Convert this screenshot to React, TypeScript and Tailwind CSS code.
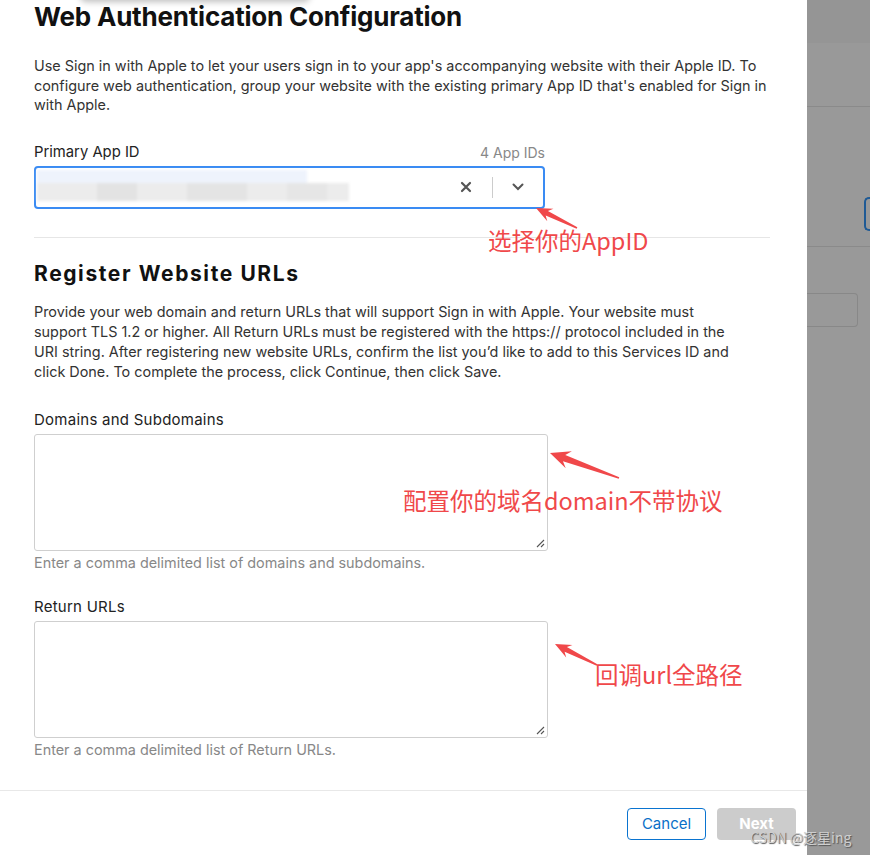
import React from "react";

type Pt = [number, number];

// red annotation arrow: tip at `tip`, tail at `tail`
function arrowPoints(tip: Pt, tail: Pt, head = 18, barb = 8, shaft = 3.2) {
  const dx = tail[0] - tip[0];
  const dy = tail[1] - tip[1];
  const len = Math.hypot(dx, dy);
  const ux = dx / len;
  const uy = dy / len;
  const nx = -uy;
  const ny = ux;
  const at = (d: number, o: number): Pt => [tip[0] + ux * d + nx * o, tip[1] + uy * d + ny * o];
  const pts: Pt[] = [
    tip,
    at(head, barb),
    at(head * 0.75, shaft),
    at(len, 0.8),
    at(len, -0.8),
    at(head * 0.75, -shaft),
    at(head, -barb),
  ];
  return pts.map((p) => p.join(",")).join(" ");
}

function Annotations() {
  return (
    <svg className="pointer-events-none absolute left-0 top-0" width={870} height={855}>
      <polygon points={arrowPoints([536, 208], [577, 228], 16, 7, 2.6)} fill="#f0484a" />
      <polygon points={arrowPoints([550, 453], [619, 478], 20, 9, 3.4)} fill="#f0484a" />
      <polygon points={arrowPoints([555, 644], [597, 665], 16, 7, 2.6)} fill="#f0484a" />
    </svg>
  );
}

function Note({ text, className }: { text: string; className: string }) {
  return (
    <div
      className={`absolute whitespace-nowrap text-[23.5px] leading-[28px] text-[#f0484a] ${className}`}
      style={{ fontFamily: '"Noto Sans CJK SC", "Noto Sans", sans-serif' }}
    >
      {text}
    </div>
  );
}

function ResizeHandle() {
  return (
    <svg className="absolute bottom-[2px] right-[2px]" width={10} height={10} viewBox="0 0 10 10">
      <line x1="9" y1="2" x2="2" y2="9" stroke="#555" strokeWidth="1.1" />
      <line x1="9" y1="6" x2="6" y2="9" stroke="#555" strokeWidth="1.1" />
    </svg>
  );
}

function TextField({ label, help }: { label: string; help: string }) {
  return (
    <div className="flex flex-col">
      <div className="text-[15px] leading-[20px] tracking-[0.25px] text-[#222]">{label}</div>
      <div className="relative mt-[4px] h-[117px] w-[514px] rounded-[3px] border border-[#cfcfcf] bg-white">
        <ResizeHandle />
      </div>
      <div className="mt-[2px] text-[14.4px] leading-[20px] text-[#888]">{help}</div>
    </div>
  );
}

export default function App() {
  return (
    <div
      className="relative flex h-[855px] w-[870px] overflow-hidden bg-white"
      style={{ fontFamily: 'Inter, Roboto, "Noto Sans", sans-serif' }}
    >
      {/* sheet */}
      <div className="relative flex h-full w-[807px] flex-col bg-white">
        {/* shadow of menu above */}
        <div className="absolute left-[80px] top-[-12px] h-[12px] w-[230px] rounded-b-md bg-white shadow-[0_2px_6px_rgba(0,0,0,0.25)]" />

        <div className="flex flex-col px-[34px]">
          <h1 className="pt-[1px] text-[26px] font-bold leading-[32px] tracking-[-0.2px] text-[#111]">
            Web Authentication Configuration
          </h1>
          <p className="mt-[23px] text-[14.4px] leading-[19.5px] text-[#333]">
            Use Sign in with Apple to let your users sign in to your app's accompanying website with their Apple ID. To
            configure web authentication, group your website with the existing primary App ID that's enabled for Sign in
            with Apple.
          </p>

          <div className="mt-[27px] flex w-[511px] items-end justify-between">
            <span className="text-[14.8px] leading-[20px] text-[#222]">Primary App ID</span>
            <span className="text-[14px] leading-[18px] text-[#888]">4 App IDs</span>
          </div>
          <div className="mt-[4px] flex h-[43px] w-[511px] items-center rounded-[4px] border-2 border-[#3a8bf3] bg-white">
            {/* blurred value */}
            <div className="flex h-full w-[316px] flex-col pl-[1px] pt-[2px] blur-[1.5px]">
              <div className="h-[13px] w-[270px] bg-[#eef3fc]" />
              <div className="flex h-[18px] w-[312px] bg-[#ececec]">
                <div className="ml-[60px] w-[40px] bg-[#e3e3e3]" />
                <div className="ml-[50px] w-[60px] bg-[#e4e4e4]" />
                <div className="ml-[40px] w-[40px] bg-[#e6e6e6]" />
              </div>
            </div>
            <div className="flex-1" />
            <svg width={12} height={12} viewBox="0 0 12 12" className="mr-[20px]">
              <path d="M2 2 L10 10 M10 2 L2 10" stroke="#555" strokeWidth="2.2" strokeLinecap="round" />
            </svg>
            <div className="h-[21px] w-px bg-[#ccc]" />
            <svg width={12} height={8} viewBox="0 0 12 8" className="mx-[19px]">
              <path d="M1.5 1.5 L6 6 L10.5 1.5" stroke="#555" strokeWidth="2" fill="none" strokeLinecap="round" />
            </svg>
          </div>

          <div className="mt-[28px] h-px w-[736px] bg-[#e6e6e6]" />

          <h2 className="mt-[22px] text-[21px] font-bold leading-[28px] tracking-[1.6px] text-[#111]">
            Register Website URLs
          </h2>
          <p className="mt-[14px] w-[706px] text-[14.4px] leading-[20px] text-[#333]">
            Provide your web domain and return URLs that will support Sign in with Apple. Your website must support TLS
            1.2 or higher. All Return URLs must be registered with the https:// protocol included in the URI string.
            After registering new website URLs, confirm the list you’d like to add to this Services ID and click Done. To
            complete the process, click Continue, then click Save.
          </p>

          <div className="mt-[28px] flex flex-col gap-[24px]">
            <TextField label="Domains and Subdomains" help="Enter a comma delimited list of domains and subdomains." />
            <TextField label="Return URLs" help="Enter a comma delimited list of Return URLs." />
          </div>
        </div>

        <div className="mt-auto flex h-[65px] justify-end gap-[11px] border-t border-[#e8e8e8] pr-[11px] pt-[17px]">
          <button className="h-[32px] w-[79px] rounded-[4px] border border-[#0a74d0] bg-white text-[15px] text-[#0a6fc8]">
            Cancel
          </button>
          <button className="h-[32px] w-[79px] rounded-[4px] bg-[#cccccc] text-[15px] font-bold text-white">
            Next
          </button>
        </div>
      </div>

      {/* dimmed page behind */}
      <div className="flex h-full flex-1 flex-col bg-[#999999]">
        <div className="h-[43px] bg-[#959595]" />
        <div className="mt-[63px] h-px bg-[#8a8a8a]" />
        <div className="mt-[90px] flex h-[34px] justify-end">
          <div className="w-[6px] rounded-l-[5px] border-2 border-r-0 border-[#1f5a95]" />
        </div>
        <div className="mt-[15px] h-px bg-[#8a8a8a]" />
        <div className="mt-[46px] h-[34px] w-[51px] rounded-r-[4px] border border-l-0 border-[#888]" />
      </div>

      <Annotations />
      <Note text="选择你的AppID" className="left-[488px] top-[226px]" />
      <Note text="配置你的域名domain不带协议" className="left-[403px] top-[486px]" />
      <Note text="回调url全路径" className="left-[595px] top-[660px]" />

      <div
        className="absolute left-[750px] top-[828px] whitespace-nowrap text-[14px] leading-[18px] text-[#cfcfcf] [text-shadow:1px_1px_1px_#555]"
        style={{ fontFamily: '"Noto Sans CJK SC", sans-serif' }}
      >
        CSDN @逐星ing
      </div>
    </div>
  );
}
